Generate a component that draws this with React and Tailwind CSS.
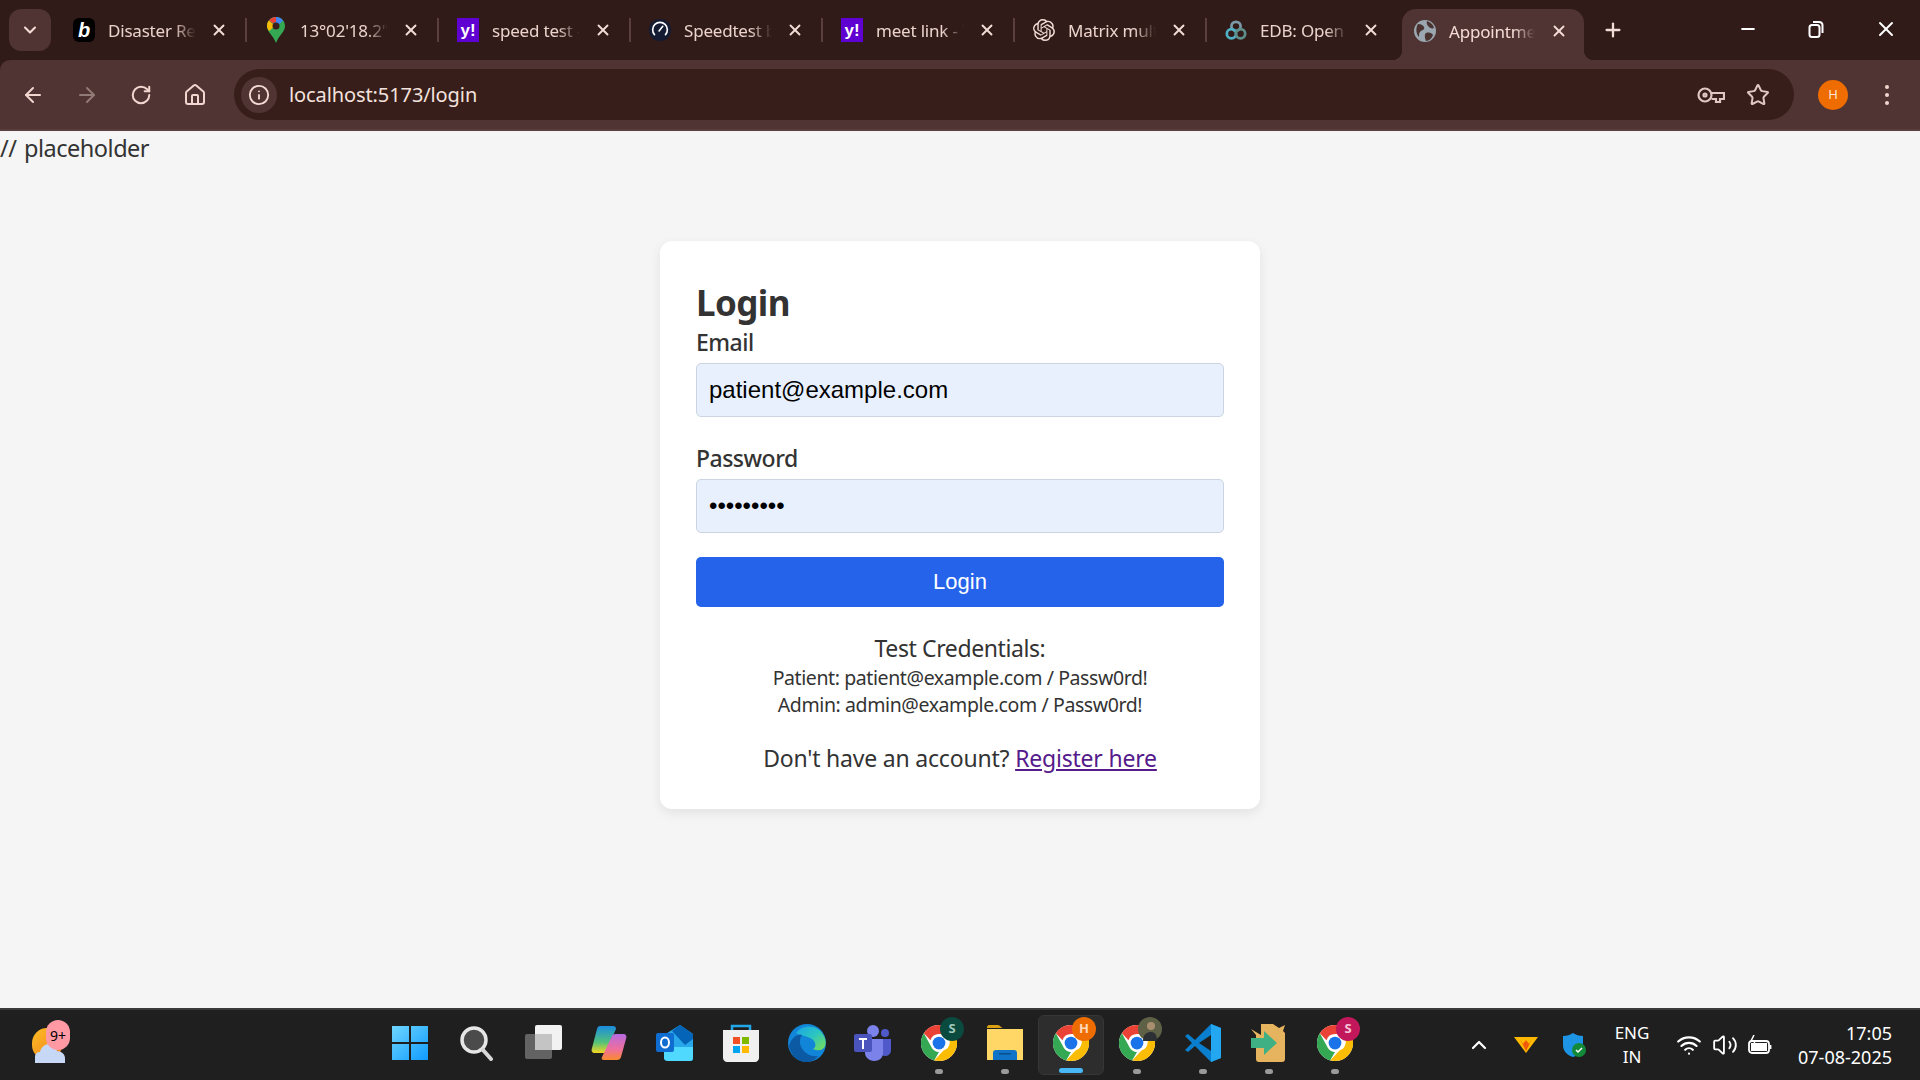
import { X, Plus, Minus, ChevronDown, ChevronUp, ArrowLeft, ArrowRight, RotateCw, Home, Info, Star, Wifi, Volume2 } from "lucide-react";
import { SiOpenai } from "react-icons/si";

const segoe = "font-['Noto_Sans',sans-serif]";

// tab favicons
function BingIcon() {
  return (
    <div className="w-[24px] h-[24px] rounded-[6px] bg-black flex items-center justify-center text-white font-['Liberation_Sans',sans-serif] font-bold italic text-[20px] leading-none">
      b
    </div>
  );
}

function MapsIcon() {
  return (
    <svg width="20" height="26" viewBox="0 0 20 26">
      <path d="M10 0C4.500 0 1 4 1 9c0 6 6 9 9 17 3-8 9-11 9-17 0-5-3.500-9-9-9z" fill="#34a853" />
      <path d="M3 3.500 9 9 3 14c-1.500-2-2-3.500-2-5 0-2.500.800-4.300 2-5.500z" fill="#fbbc04" />
      <path d="M10 0c3 0 5.500 1.300 7 3.500L11 9 5 2c1.300-1.300 3-2 5-2z" fill="#4285f4" />
      <path d="M3 3.500C4.500 1.300 7 0 10 0v5a4 4 0 0 0-3 1.500z" fill="#ea4335" />
      <circle cx="10" cy="9" r="3.500" fill="#3a1f1c" />
    </svg>
  );
}

function YahooIcon() {
  return (
    <div className="w-[24px] h-[24px] bg-[#5f01d1] flex items-center justify-center text-white font-['Liberation_Sans',sans-serif] font-bold text-[17px] leading-none">
      y!
    </div>
  );
}

function SpeedIcon() {
  return (
    <svg width="24" height="24" viewBox="0 0 24 24">
      <circle cx="12" cy="12" r="12" fill="#141b33" />
      <path d="M6 17a8 8 0 1 1 12 0" fill="none" stroke="#fff" strokeWidth="1.800" strokeLinecap="round" />
      <path d="M11 13l4-5" stroke="#fff" strokeWidth="1.800" strokeLinecap="round" />
    </svg>
  );
}

function EdbIcon() {
  return (
    <svg width="24" height="22" viewBox="0 0 24 22" fill="none" strokeWidth="3">
      <circle cx="12" cy="7" r="5" stroke="#7a9aa8" />
      <circle cx="7" cy="15" r="5" stroke="#4fb0c6" />
      <circle cx="17" cy="15" r="5" stroke="#5f8f8a" />
    </svg>
  );
}

function GlobeIcon() {
  return (
    <svg width="22" height="22" viewBox="0 0 22 22">
      <circle cx="11" cy="11" r="11" fill="#9aa7b0" />
      <path d="M4 4c3 0 5 1 6 3s-1 3-3 4-2 3-2 6C2 14 1.500 8 4 4zM13 1c3 1 6 3 7 7-2 1-4 0-5-1s-3-3-2-6zM12 13c3-1 6 0 7 2-1 3-4 6-7 6-1-3-2-6 0-8z" fill="#4a3230" />
    </svg>
  );
}

const tabs = [
  { title: "Disaster Relief", icon: <BingIcon /> },
  { title: "13°02'18.2\"N 80", icon: <MapsIcon /> },
  { title: "speed test - Yahoo", icon: <YahooIcon /> },
  { title: "Speedtest by Ookla", icon: <SpeedIcon /> },
  { title: "meet link - Yahoo", icon: <YahooIcon /> },
  { title: "Matrix multiplication", icon: <SiOpenai size={22} color="#f0dcd6" /> },
  { title: "EDB: Open Source", icon: <EdbIcon /> },
];

function Tab({ title, icon, last }) {
  return (
    <div className={`w-[192px] h-full flex items-center pl-[18px] ${last ? "w-[195px]" : ""}`}>
      <div className="w-[22px] h-[26px] flex items-center justify-center shrink-0">{icon}</div>
      <span className={`${segoe} ml-[13px] mr-[14px] pt-[2px] w-[88px] overflow-hidden whitespace-nowrap text-[17px] tracking-[-0.2px] text-[#ecd3cc] [mask-image:linear-gradient(to_right,black_75%,transparent)]`}>
        {title}
      </span>
      <X size={18} strokeWidth={2.500} className="text-[#f3dcd6] shrink-0" />
      {!last && <div className="ml-auto w-[2px] h-[24px] bg-[#5a3f3c]" />}
    </div>
  );
}

function ChromeIcon() {
  return (
    <svg width="36" height="36" viewBox="0 0 48 48">
      <circle cx="24" cy="24" r="24" fill="#fff" />
      <path d="M24 0a24 24 0 0 1 20.800 12H24a12 12 0 0 0-11.400 8.200L3.800 11A24 24 0 0 1 24 0z" fill="#ea4335" />
      <path d="M3.800 11l10.400 19A12 12 0 0 0 24 36l-6.500 11.200A24 24 0 0 1 3.800 11z" fill="#34a853" />
      <path d="M44.800 12A24 24 0 0 1 24 48l-6.500-.800L30 34a12 12 0 0 0 2-22z" fill="#fbbc04" />
      <circle cx="24" cy="24" r="11" fill="#fff" />
      <circle cx="24" cy="24" r="8.500" fill="#1a73e8" />
    </svg>
  );
}

// chrome with the profile badge on top
function ChromeProfile({ letter, bg, fg, photo }) {
  return (
    <div className="relative w-[36px] h-[36px]">
      <ChromeIcon />
      <div
        className={`absolute -top-[8px] left-[19px] w-[24px] h-[24px] rounded-full flex items-center justify-center text-[13px] font-bold font-['Noto_Sans',sans-serif] ${bg} ${fg}`}>
        {letter}
        {photo && (
          <svg width="24" height="24" viewBox="0 0 24 24">
            <circle cx="12" cy="12" r="12" fill="#5f6146" />
            <circle cx="13" cy="9" r="4" fill="#a98f6f" />
            <path d="M5 24c0-7 4-9 8-9s6 3 6 9z" fill="#2c2f33" />
          </svg>
        )}
      </div>
    </div>
  );
}

function WinIcon() {
  return (
    <svg width="36" height="36" viewBox="0 0 36 36">
      <defs>
        <linearGradient id="winGrad" x1="0" y1="0" x2="1" y2="1">
          <stop offset="0" stopColor="#6fd6ff" />
          <stop offset="1" stopColor="#0f9bff" />
        </linearGradient>
      </defs>
      <path d="M0 1h17v16H0zM19 1h17v16H19zM0 19h17v16H0zM19 19h17v16H19z" fill="url(#winGrad)" />
    </svg>
  );
}

function SearchIcon() {
  return (
    <svg width="36" height="36" viewBox="0 0 36 36">
      <circle cx="15" cy="15" r="12" fill="#4b4b4b" stroke="#e6e6e6" strokeWidth="3.500" />
      <path d="M24 25l8 9" stroke="#d8d8d8" strokeWidth="4" strokeLinecap="round" />
    </svg>
  );
}

function TaskViewIcon() {
  return (
    <svg width="38" height="36" viewBox="0 0 38 36">
      <rect x="11" y="0" width="27" height="25" rx="2" fill="#f2f2f2" />
      <rect x="1" y="9" width="27" height="25" rx="2" fill="#6a6a6a" fillOpacity="0.900" />
      <rect x="11" y="9" width="17" height="16" fill="#c4c4c4" />
    </svg>
  );
}

function CopilotIcon() {
  return (
    <svg width="36" height="36" viewBox="0 0 36 36">
      <defs>
        <linearGradient id="copA" x1="0" y1="0" x2="0" y2="1">
          <stop offset="0" stopColor="#1b8be0" />
          <stop offset="0.600" stopColor="#52c27a" />
          <stop offset="1" stopColor="#f4d71f" />
        </linearGradient>
        <linearGradient id="copB" x1="0" y1="0" x2="0" y2="1">
          <stop offset="0" stopColor="#b66ae0" />
          <stop offset="0.600" stopColor="#f0709a" />
          <stop offset="1" stopColor="#f98b2f" />
        </linearGradient>
      </defs>
      <path d="M9 1h13c2 0 3 1 3 3L15 26c-1 2-2 2-4 2H4c-3 0-4-2-3-5L6 4c.500-2 1.500-3 3-3z" fill="url(#copA)" />
      <path d="M24 9h8c3 0 4 2 3 5l-5 18c-.500 2-2 3-4 3H13c-2 0-3-1-2-3l10-21c.500-1 1.500-2 3-2z" fill="url(#copB)" />
    </svg>
  );
}

function OutlookIcon() {
  return (
    <svg width="38" height="36" viewBox="0 0 38 36">
      <path d="M8 10 24 0l13 9v24c0 2-1 3-3 3H12c-2 0-4-1-4-3z" fill="#28a8ea" />
      <path d="M16 6 24 0l13 9v5l-8 6z" fill="#0364b8" />
      <path d="M8 22h29v11c0 2-1 3-3 3H12c-2 0-4-1-4-3z" fill="#50d9ff" />
      <rect x="0" y="8" width="18" height="19" rx="2" fill="#0f6cd0" />
      <ellipse cx="9" cy="17.500" rx="4" ry="5" fill="none" stroke="#fff" strokeWidth="2" />
    </svg>
  );
}

function StoreIcon() {
  return (
    <svg width="36" height="38" viewBox="0 0 36 38">
      <path d="M9 7V2h18v5" fill="none" stroke="#22a7e8" strokeWidth="2.500" />
      <path d="M0 6h36v28c0 2-2 4-4 4H4c-2 0-4-2-4-4z" fill="#f0f0f0" />
      <path d="M10 13h7v7h-7z" fill="#f25022" />
      <path d="M19 13h7v7h-7z" fill="#7fba00" />
      <path d="M10 22h7v7h-7z" fill="#00a4ef" />
      <path d="M19 22h7v7h-7z" fill="#ffb900" />
    </svg>
  );
}

function EdgeIcon() {
  return (
    <svg width="38" height="38" viewBox="0 0 38 38">
      <defs>
        <linearGradient id="edgeA" x1="0" y1="0" x2="1" y2="1">
          <stop offset="0" stopColor="#1aa3e8" />
          <stop offset="0.500" stopColor="#2cc6c0" />
          <stop offset="1" stopColor="#7ee04e" />
        </linearGradient>
      </defs>
      <circle cx="19" cy="19" r="19" fill="#1185d8" />
      <path d="M8 9C14 0 30 0 36 12c3 6 2 13-4 14-3 .500-6 0-7-1 3-2 3-5 1-8-4-5-13-5-18-8z" fill="url(#edgeA)" />
      <path d="M1 22c2-7 7-12 13-11-3 4-3 10 1 15 3 4 9 7 15 6-3 4-8 6-12 6C10 38 3 32 1 22z" fill="#0c59a4" />
    </svg>
  );
}

function TeamsIcon() {
  return (
    <svg width="38" height="36" viewBox="0 0 38 36">
      <circle cx="19" cy="6" r="6" fill="#7b83eb" />
      <circle cx="31" cy="8" r="4" fill="#5059c9" />
      <path d="M26 14h11v11c0 4-3 6-6 6-2 0-4-1-5-2z" fill="#5059c9" />
      <path d="M11 14h18v14c0 5-4 8-9 8s-9-4-9-8z" fill="#7b83eb" />
      <rect x="0" y="9" width="18" height="18" rx="2" fill="#4b53bc" />
      <path d="M5 13h8v2h-3v9H8v-9H5z" fill="#fff" />
    </svg>
  );
}

function FolderIcon() {
  return (
    <svg width="36" height="36" viewBox="0 0 36 36">
      <path d="M0 2c0-1 1-2 2-2h9c2 0 3 3 5 3h-16z" fill="#d9a010" />
      <path d="M0 4h36v31H0z" fill="#ffd766" />
      <path d="M6 35V28c0-2 1-3 3-3h18c2 0 3 1 3 3v7z" fill="#0f74c7" />
      <rect x="12" y="28" width="12" height="1.500" fill="#0a4e8c" />
    </svg>
  );
}

function VsCodeIcon() {
  return (
    <svg width="36" height="38" viewBox="0 0 36 38">
      <path d="M26 0 10 16 3 10 0 12l7 7-7 7 3 2 7-6 16 16 10-4V4z" fill="#0a7fcf" />
      <path d="M26 0l10 4v30l-10 4z" fill="#22a7f0" />
      <path d="M26 11 14 19l12 8z" fill="#1f1f1f" />
    </svg>
  );
}

function ArrowBoxIcon() {
  return (
    <svg width="36" height="38" viewBox="0 0 36 38">
      <path d="M0 5l10 6V0h12l6 4 6-3-2 6 2 2v26c0 2-1 3-3 3H8c-2 0-3-1-3-3V11z" fill="#e6b45e" />
      <path d="M0 14h13V7l13 12-13 12v-7H0z" fill="#3fb083" />
    </svg>
  );
}

function WeatherIcon() {
  return (
    <div className="relative w-[36px] h-[36px]">
      <div className="absolute left-0 top-[1px] w-[30px] h-[32px] rounded-full bg-gradient-to-br from-[#fbbf24] to-[#f0781c]" />
      <svg className="absolute left-[3px] top-[14px]" width="30" height="22" viewBox="0 0 30 22">
        <path d="M0 22v-6c0-3 2-5 5-5 1-5 5-8 9-8s7 3 8 7c4 0 8 3 8 7v5z" fill="#c7d8f7" />
      </svg>
      <div className={`absolute left-[14px] -top-[7px] w-[24px] h-[30px] rounded-full bg-[#ff9aa5] flex items-center justify-center text-[14px] text-black ${segoe}`}>
        9+
      </div>
    </div>
  );
}

const taskIcons = [
  { icon: <WinIcon />, shift: true },
  { icon: <SearchIcon /> },
  { icon: <TaskViewIcon /> },
  { icon: <CopilotIcon /> },
  { icon: <OutlookIcon /> },
  { icon: <StoreIcon /> },
  { icon: <EdgeIcon /> },
  { icon: <TeamsIcon /> },
  { icon: <ChromeProfile letter="S" bg="bg-[#0b4a3f]" fg="text-[#9fc9bd]" />, pip: true },
  { icon: <FolderIcon />, pip: true },
  { icon: <ChromeProfile letter="H" bg="bg-[#ef6c00]" fg="text-[#ffd9b8]" />, active: true },
  { icon: <ChromeProfile photo />, pip: true },
  { icon: <VsCodeIcon />, pip: true },
  { icon: <ArrowBoxIcon />, pip: true },
  { icon: <ChromeProfile letter="S" bg="bg-[#c2185b]" fg="text-[#f7c4d8]" />, pip: true },
];

function TaskIcon({ icon, pip, active, shift }) {
  return (
    <div className={`relative w-[66px] h-[60px] flex items-center justify-center rounded-[6px] ${active ? "bg-[#2d2d2d] border border-[#363636]" : ""}`}>
      <div className={`-mt-[4px] ${shift ? "-ml-[3px]" : ""}`}>{icon}</div>
      {pip && <div className="absolute bottom-[1px] left-[29px] w-[8px] h-[5px] rounded-full bg-[#9a9a9a]" />}
      {active && <div className="absolute bottom-[1px] left-[20px] w-[24px] h-[5px] rounded-full bg-[#47b8f5]" />}
    </div>
  );
}

export default function App() {
  return (
    <div className="w-full h-screen flex flex-col overflow-hidden bg-[#f5f5f5]">
      {/* TAB STRIP */}
      <div className="h-[60px] shrink-0 bg-[#301b18] flex items-end">
        <div className="self-start mt-[9px] ml-[9px] w-[42px] h-[42px] rounded-[12px] bg-[#503433] flex items-center justify-center text-[#f3dcd6]">
          <ChevronDown size={20} strokeWidth={2.500} />
        </div>
        <div className="ml-[4px] h-[60px] flex items-center">
          {tabs.map((t, i) => (
            <Tab key={i} title={t.title} icon={t.icon} last={i === tabs.length - 1} />
          ))}
        </div>
        {/* active tab */}
        <div className="relative w-[182px] h-[51px] bg-[#503433] rounded-t-[14px] flex items-center pl-[12px] pb-[8px]">
          <div className="w-[22px] flex justify-center"><GlobeIcon /></div>
          <span className={`${segoe} ml-[13px] mr-[15px] pt-[2px] w-[86px] overflow-hidden whitespace-nowrap text-[17px] tracking-[-0.2px] text-[#f3dcd6] [mask-image:linear-gradient(to_right,black_75%,transparent)]`}>
            Appointment
          </span>
          <X size={18} strokeWidth={2.500} className="text-[#f3dcd6]" />
          <div className="absolute -left-[10px] bottom-0 w-[10px] h-[10px] bg-[radial-gradient(circle_at_0_0,transparent_10px,#503433_10.500px)]" />
          <div className="absolute -right-[10px] bottom-0 w-[10px] h-[10px] bg-[radial-gradient(circle_at_100%_0,transparent_10px,#503433_10.500px)]" />
        </div>
        <div className="h-[60px] flex items-center ml-[18px] text-[#f3dcd6]">
          <Plus size={22} strokeWidth={2.500} />
        </div>
        <div className="ml-auto h-[60px] flex items-center text-white pr-[22px] pb-[2px]">
          <Minus size={20} strokeWidth={2.500} />
          <svg className="ml-[50px]" width="16" height="17" viewBox="0 0 16 17" fill="none" stroke="currentColor" strokeWidth="2">
            <rect x="1.500" y="4" width="10" height="12" rx="2.500" />
            <path d="M5 1h6c2 0 3.500 1.500 3.500 3.500V12" />
          </svg>
          <X size={24} strokeWidth={2} className="ml-[50px]" />
        </div>
      </div>

      {/* TOOLBAR */}
      <div className="shrink-0 bg-[#301b18]">
        <div className="h-[71px] bg-[#503433] border-b-2 border-[#5a3f3d] flex items-center text-[#f0d6cf] rounded-tl-[10px]">
          <ArrowLeft size={24} strokeWidth={2} className="ml-[21px]" />
          <ArrowRight size={24} strokeWidth={2} className="ml-[30px] text-[#927a76]" />
          <RotateCw size={22} strokeWidth={2.200} className="ml-[31px]" />
          <Home size={24} strokeWidth={2} className="ml-[31px]" />
          <div className="ml-[27px] w-[1560px] h-[51px] rounded-full bg-[#381e1b] flex items-center pl-[7px] pr-[24px]">
            <div className="w-[36px] h-[36px] rounded-full bg-[#503433] flex items-center justify-center text-[#f3dcd6]">
              <Info size={22} strokeWidth={2} />
            </div>
            <span className={`${segoe} ml-[12px] text-[20px] tracking-[-0.1px] text-[#f3e2dd]`}>localhost:5173/login</span>
            <svg className="ml-auto mr-[2px] text-[#e0c8c2]" width="28" height="18" viewBox="0 0 28 18" fill="none" stroke="currentColor" strokeWidth="2.200">
              <circle cx="8" cy="9" r="6.500" />
              <circle cx="8" cy="9" r="1.500" />
              <path d="M14.500 7H27v6h-4v3h-4v-3h-4.500" />
            </svg>
            <Star size={24} strokeWidth={2} className="ml-[19px] text-[#e0c8c2]" />
          </div>
          <div className={`${segoe} ml-[24px] w-[30px] h-[30px] rounded-full bg-[#ef6c00] flex items-center justify-center text-[13px] text-[#ffe4cf]`}>
            H
          </div>
          <div className="ml-[37px] flex flex-col gap-[4px]">
            <span className="w-[4px] h-[4px] rounded-full bg-[#f0d6cf]" />
            <span className="w-[4px] h-[4px] rounded-full bg-[#f0d6cf]" />
            <span className="w-[4px] h-[4px] rounded-full bg-[#f0d6cf]" />
          </div>
        </div>
      </div>

      {/* PAGE */}
      <div className={`flex-1 min-h-0 bg-[#f5f5f5] text-[#333] ${segoe}`}>
        <p className="text-[23.500px] leading-[32px] mt-[1px] tracking-[-0.5px] [word-spacing:2px]">// placeholder</p>
        <div className="mt-[77px] mx-auto w-[600px] h-[568px] bg-white rounded-[12px] shadow-[0_4px_12px_rgba(0,0,0,0.08)] px-[36px] pt-[38px]">
          <h1 className="text-[35px] leading-[48px] font-bold tracking-[-0.6px]">Login</h1>
          <label className="block text-[23px] leading-[32px] font-medium tracking-[-0.5px] mt-[-1px]">Email</label>
          <input
            readOnly
            value="patient@example.com"
            className="mt-[5px] block w-full h-[54px] px-[12px] rounded-[5px] border border-[#cbd5e1] bg-[#e8f0fe] text-black text-[24px] font-['Liberation_Sans',sans-serif]"
          />
          <label className="block text-[23px] leading-[32px] font-medium tracking-[-0.5px] mt-[25px]">Password</label>
          <input
            readOnly
            type="password"
            value="Passw0rd!"
            className="mt-[5px] block w-full h-[54px] px-[12px] rounded-[5px] border border-[#cbd5e1] bg-[#e8f0fe] text-black text-[24px] font-['Liberation_Sans',sans-serif]"
          />
          <button className="mt-[24px] block w-full h-[50px] pb-[2px] rounded-[5px] bg-[#2563eb] text-white text-[22px] font-['Liberation_Sans',sans-serif]">
            Login
          </button>
          <div className="mt-[25px] text-center">
            <p className="text-[23px] leading-[32px] tracking-[-0.4px]">Test Credentials:</p>
            <p className="text-[19.500px] leading-[27px] tracking-[-0.4px]">Patient: patient@example.com / Passw0rd!</p>
            <p className="text-[19.500px] leading-[27px] tracking-[-0.4px]">Admin: admin@example.com / Passw0rd!</p>
            <p className="mt-[24px] text-[23px] leading-[32px] tracking-[-0.2px]">
              Don't have an account? <a href="#" className="text-[#551a8b] underline">Register here</a>
            </p>
          </div>
        </div>
      </div>

      {/* TASKBAR */}
      <div className="h-[72px] shrink-0 bg-[#1f1f1f] border-t-2 border-[#3a3a3a] flex items-center relative">
        <div className="ml-[32px] w-[346px]">
          <WeatherIcon />
        </div>
        <div className="flex items-center">
          {taskIcons.map((t, i) => (
            <TaskIcon key={i} icon={t.icon} pip={t.pip} active={t.active} shift={t.shift} />
          ))}
        </div>
        <div className={`ml-auto flex items-center text-white ${segoe}`}>
          <ChevronUp size={24} strokeWidth={2.200} />
          <svg className="ml-[23px]" width="24" height="16" viewBox="0 0 24 16">
            <path d="M0 0h24l-12 16z" fill="#ffb900" />
            <path d="M6 2l3 5 3-4 3 4 3-5-6 12z" fill="#f0580a" />
          </svg>
          <svg className="ml-[24px]" width="24" height="24" viewBox="0 0 24 24">
            <path d="M11 0c3 2 6 3 10 3v9c0 6-4 10-10 12C5 22 1 18 1 12V3c4 0 7-1 10-3z" fill="#1d94e4" />
            <circle cx="17" cy="17" r="7" fill="#128a3a" />
            <path d="M14 17l2 2 4-4" fill="none" stroke="#fff" strokeWidth="1.500" />
          </svg>
          <div className="ml-[21px] text-center text-[17px] leading-[24px] w-[50px]">
            <div>ENG</div>
            <div>IN</div>
          </div>
          <Wifi size={26} strokeWidth={2} className="ml-[19px]" />
          <Volume2 size={26} strokeWidth={1.700} className="ml-[10px]" />
          <svg className="ml-[10px]" width="24" height="20" viewBox="0 0 24 20" fill="none" stroke="#fff" strokeWidth="1.800">
            <rect x="1" y="6" width="20" height="12" rx="3" />
            <rect x="3" y="8" width="16" height="8" fill="#fff" stroke="none" />
            <path d="M22.500 10v4" />
            <path d="M6 0 3 6h4l-2 5" strokeWidth="1.500" />
          </svg>
          <div className="ml-[26px] mr-[28px] text-right text-[18px] leading-[24px]">
            <div>17:05</div>
            <div>07-08-2025</div>
          </div>
        </div>
      </div>
    </div>
  );
}
